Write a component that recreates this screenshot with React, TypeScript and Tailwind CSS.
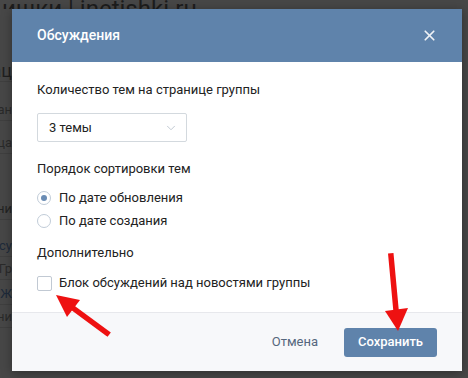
import { X, ChevronDown } from 'lucide-react';

// faded page rows visible at the left edge, behind the modal
const sideRows = [
  { t: 'Информац', top: 'mt-[54px]', cls: 'text-[18px] text-[#1f1f1f]' },
  { t: 'Описан', top: 'mt-[20px]', cls: 'text-[13px] text-[#2a2a2a]' },
  { t: 'Страница', top: 'mt-[14px]', cls: 'text-[13px] text-[#2a2a2a]' },
  { t: 'Кни', top: 'mt-[47px]', cls: 'text-[13px] text-[#222]' },
  { t: 'Обсу', top: 'mt-[18px]', cls: 'text-[13px] text-[#1e2a3a]' },
  { t: 'Гр', top: 'mt-[4px]', cls: 'text-[13px] text-[#2a2a2a]' },
  { t: 'Ж', top: 'mt-[6px]', cls: 'text-[13px] text-[#1e2a3a]' },
  { t: 'Кни', top: 'mt-[4px]', cls: 'text-[13px] text-[#2a2a2a]' },
  { t: 'Обн', top: 'mt-[48px]', cls: 'text-[13px] text-[#2a2a2a]' },
];

function Radio({ checked, label }: { checked?: boolean; label: string }) {
  return (
    <label className="flex items-center h-[20px] gap-[8px] cursor-pointer">
      <span className="w-[14px] h-[14px] rounded-full border border-[#c1ccd8] bg-white flex items-center justify-center">
        {checked && <span className="w-[6px] h-[6px] rounded-full bg-[#6a8cb4]" />}
      </span>
      <span className="text-[13px] text-[#222]">{label}</span>
    </label>
  );
}

export default function App() {
  return (
    <div
      className="relative w-[468px] h-[378px] overflow-hidden bg-[#474747]"
      style={{ fontFamily: 'Roboto, "Open Sans", "Noto Sans", sans-serif' }}
    >
      {/* page underneath the overlay */}
      <div className="flex flex-col">
        <div className="h-[9px] overflow-hidden flex items-end pl-[2px]">
          <span className="text-[24px] leading-[24px] text-[#1d1d1d] whitespace-nowrap translate-y-[12px]">ишки | inetishki.ru</span>
        </div>
        <div className="w-[12px] overflow-hidden flex flex-col">
          {sideRows.map((r, i) => (
            <div key={i} className={`${r.top} ${r.cls} flex justify-end leading-[16px] whitespace-nowrap border-b border-[#3f3f3f] pb-[2px]`}>
              <span>{r.t}</span>
            </div>
          ))}
        </div>
      </div>

      {/* modal */}
      <div className="absolute left-[12px] top-[9px] w-[450px] flex flex-col bg-white shadow-[0_2px_10px_rgba(0,0,0,0.35)]">
        <div className="h-[53px] bg-[#5f83ab] flex items-center justify-between pl-[25px] pr-[24px]">
          <span className="text-[14px] font-medium text-white">Обсуждения</span>
          <X className="w-[17px] h-[17px] text-white opacity-90" strokeWidth={2.4} />
        </div>

        <div className="flex flex-col pl-[25px] pt-[20px] pb-[19px] text-[13px] leading-[16px] text-[#222]">
          <div>Количество тем на странице группы</div>
          <div className="mt-[15px] w-[150px] h-[29px] border border-[#d3d9de] rounded-[2px] flex items-center justify-between pl-[11px] pr-[8px]">
            <span>3 темы</span>
            <ChevronDown className="w-[14px] h-[14px] text-[#b8c1cc]" strokeWidth={1.5} />
          </div>

          <div className="mt-[19px]">Порядок сортировки тем</div>
          <div className="mt-[11px] flex flex-col gap-[3px]">
            <Radio checked label="По дате обновления" />
            <Radio label="По дате создания" />
          </div>

          <div className="mt-[14px]">Дополнительно</div>
          <label className="mt-[12px] flex items-center h-[20px] gap-[7px]">
            <span className="w-[15px] h-[15px] rounded-[2px] border border-[#c1c9d3] bg-white" />
            <span>Блок обсуждений над новостями группы</span>
          </label>
        </div>

        <div className="h-[59px] bg-[#f7f8fa] border-t border-[#e7e8ec] flex items-center justify-end pr-[25px] gap-[26px]">
          <span className="text-[13px] text-[#55677d]">Отмена</span>
          <button className="h-[29px] w-[93px] rounded-[3px] bg-[#5f83ab] text-white text-[13px] font-medium">
            Сохранить
          </button>
        </div>
      </div>

      {/* red annotation arrows */}
      <svg className="absolute inset-0 pointer-events-none" width="468" height="378" viewBox="0 0 468 378">
        <line x1="107" y1="333" x2="73" y2="308" stroke="#ee1111" strokeWidth="5.5" strokeLinecap="square" />
        <polygon points="56,295 80,300 67,317" fill="#ee1111" />
        <line x1="391" y1="256" x2="396" y2="310" stroke="#ee1111" strokeWidth="5.5" strokeLinecap="square" />
        <polygon points="398,331 408,308 385,311" fill="#ee1111" />
      </svg>
    </div>
  );
}
